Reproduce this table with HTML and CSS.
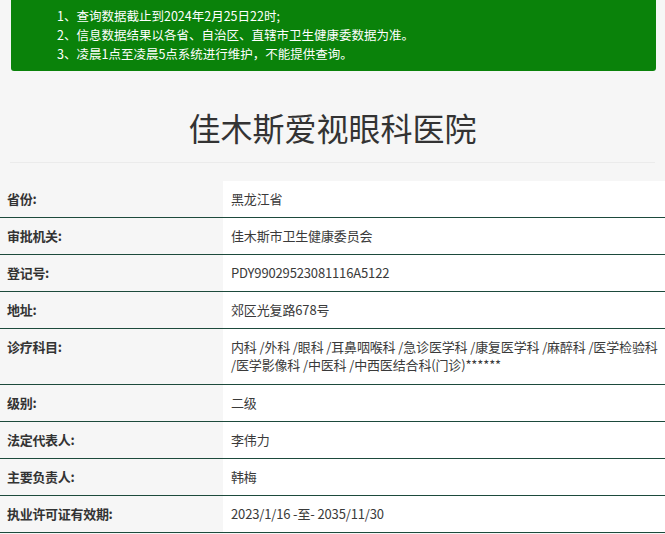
FILE: index.html
```html
<!DOCTYPE html>
<html lang="zh-CN">
<head>
<meta charset="utf-8">
<title>佳木斯爱视眼科医院</title>
<link rel="stylesheet" href="styles.css">
</head>
<body>
<div class="notice">
  <p>1、查询数据截止到2024年2月25日22时;</p>
  <p>2、信息数据结果以各省、自治区、直辖市卫生健康委数据为准。</p>
  <p>3、凌晨1点至凌晨5点系统进行维护，不能提供查询。</p>
</div>
<h1 class="title">佳木斯爱视眼科医院</h1>
<div class="info">
  <div class="row"><div class="label">省份:</div><div class="value">黑龙江省</div></div>
  <div class="row"><div class="label">审批机关:</div><div class="value">佳木斯市卫生健康委员会</div></div>
  <div class="row"><div class="label">登记号:</div><div class="value">PDY99029523081116A5122</div></div>
  <div class="row"><div class="label">地址:</div><div class="value">郊区光复路678号</div></div>
  <div class="row row-tall"><div class="label">诊疗科目:</div><div class="value">内科 /外科 /眼科 /耳鼻咽喉科 /急诊医学科 /康复医学科 /麻醉科 /医学检验科 /医学影像科 /中医科 /中西医结合科(门诊)******</div></div>
  <div class="row"><div class="label">级别:</div><div class="value">二级</div></div>
  <div class="row"><div class="label">法定代表人:</div><div class="value">李伟力</div></div>
  <div class="row"><div class="label">主要负责人:</div><div class="value">韩梅</div></div>
  <div class="row"><div class="label">执业许可证有效期:</div><div class="value">2023/1/16 -至- 2035/11/30</div></div>
</div>
</body>
</html>
```

FILE: styles.css
```css
html, body {
  margin: 0;
  padding: 0;
}
body {
  background: #f6f6f6;
  font-family: "Noto Sans CJK SC", "Noto Sans", sans-serif;
  color: #333;
}
.notice {
  margin: 0 9px 0 11px;
  padding: 6px 0 8px 46px;
  background: #0a820a;
  border-radius: 0 0 3px 3px;
  color: #fff;
  font-size: 12.5px;
  line-height: 19px;
}
.notice p {
  margin: 0;
}
.title {
  margin: 0 10px;
  padding: 36px 0 15px;
  border-bottom: 1px solid #ebebeb;
  text-align: center;
  font-size: 32px;
  line-height: 40px;
  font-weight: normal;
  color: #333;
}
.info {
  margin-top: 18px;
}
.row {
  display: grid;
  grid-template-columns: 223px 1fr;
  border-bottom: 1px solid #1d4a3c;
  font-size: 13px;
  line-height: 18px;
}
.row-tall .value {
  padding-bottom: 10px;
}
.label {
  padding: 9px 0 9px 7px;
  font-weight: bold;
  color: #333;
  letter-spacing: -0.3px;
}
.value {
  padding: 9px 0 9px 8px;
  background: #fff;
  color: #3a3a3a;
  letter-spacing: -0.15px;
}
```
